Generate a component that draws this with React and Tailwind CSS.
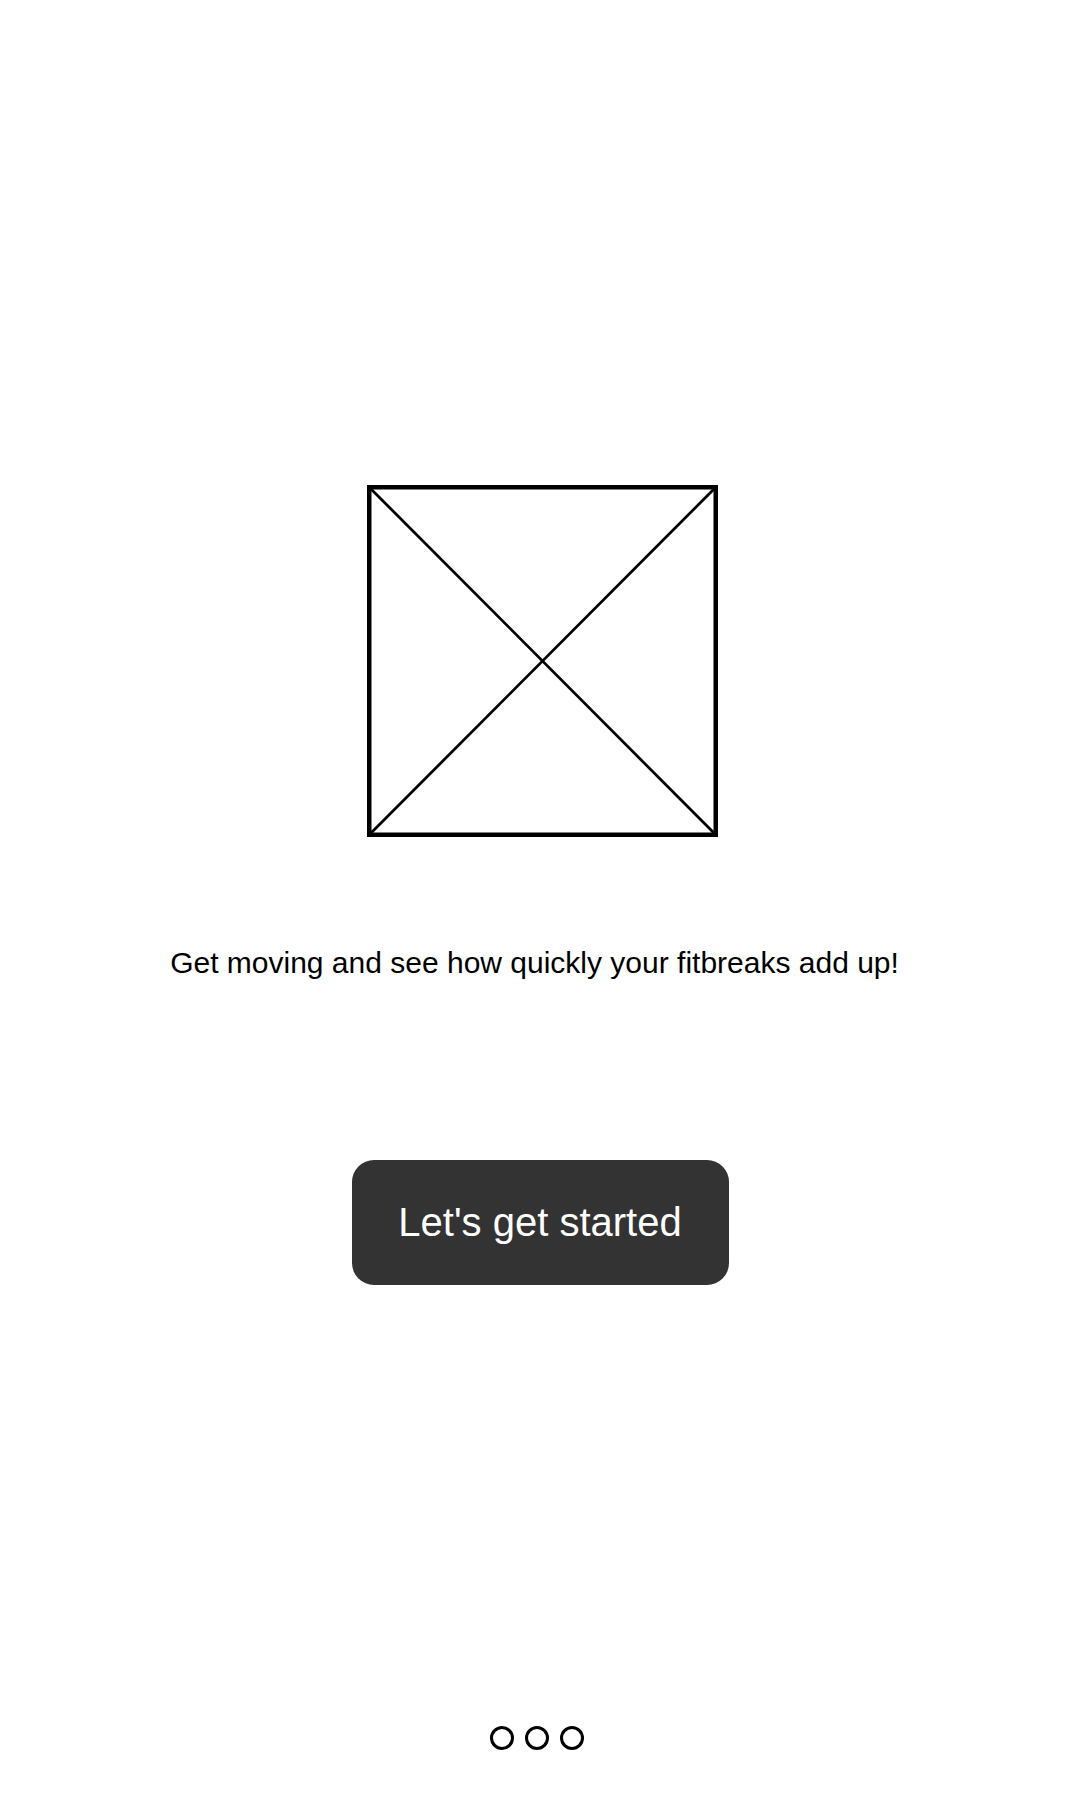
export default function App() {
  return (
    <div
      className="w-[1080px] h-[1800px] bg-white flex flex-col items-center"
      style={{ fontFamily: '"Liberation Sans", Arial, sans-serif' }}
    >
      <svg
        className="mt-[485px] block ml-[4px]"
        width="351"
        height="352"
        viewBox="0 0 351 352"
      >
        <rect x="2.25" y="2.25" width="346.5" height="347.5" fill="none" stroke="#000" strokeWidth="4.5" />
        <line x1="3" y1="3" x2="348" y2="349" stroke="#000" strokeWidth="2.75" />
        <line x1="348" y1="3" x2="3" y2="349" stroke="#000" strokeWidth="2.75" />
      </svg>
      <p className="mt-[109px] text-[30px] leading-[34px] text-black mr-[11px] whitespace-nowrap">
        Get moving and see how quickly your fitbreaks add up!
      </p>
      <button className="mt-[180px] w-[377px] h-[125px] rounded-[22px] bg-[#333333] text-white text-[40px] leading-none flex items-center justify-center pb-[2px]">
        Let's get started
      </button>
      <div className="mt-[441px] flex gap-[11px] mr-[7px]">
        <span className="w-[24px] h-[24px] rounded-full border-[3px] border-black" />
        <span className="w-[24px] h-[24px] rounded-full border-[3px] border-black" />
        <span className="w-[24px] h-[24px] rounded-full border-[3px] border-black" />
      </div>
    </div>
  );
}
